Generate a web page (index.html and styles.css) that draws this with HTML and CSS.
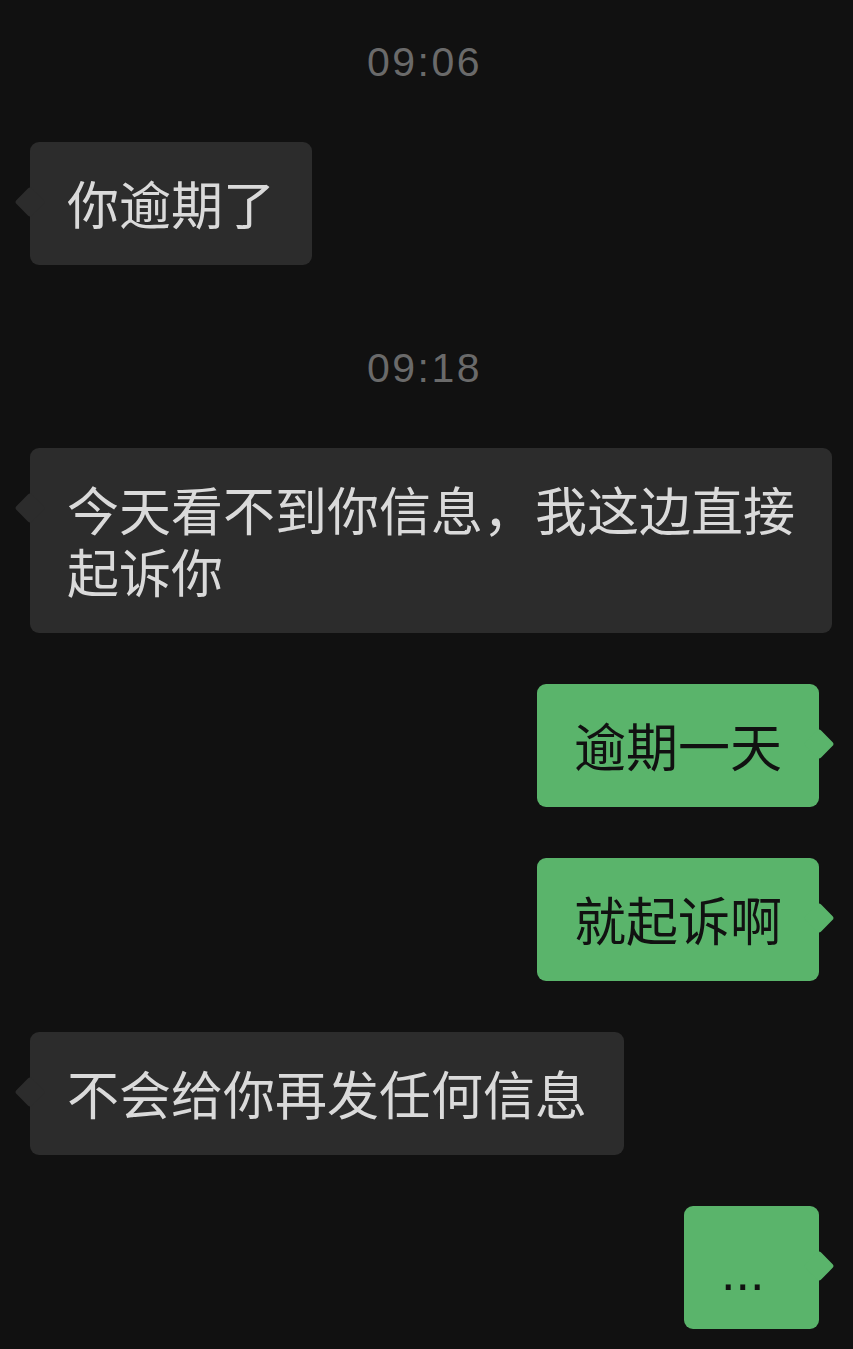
FILE: index.html
```html
<!DOCTYPE html>
<html lang="zh-CN">
<head>
  <meta charset="UTF-8">
  <meta name="viewport" content="width=device-width, initial-scale=1.0">
  <title>聊天记录</title>
  <link rel="stylesheet" href="styles.css">
</head>
<body>

  <div class="chat">
    <!-- 第一段 -->
    <div class="time">09:06</div>
    <div class="row left">
      <div class="bubble">你逾期了</div>
    </div>

    <!-- 第二段 -->
    <div class="time">09:18</div>
    <div class="row left">
      <div class="bubble">今天看不到你信息，我这边直接起诉你</div>
    </div>
    <div class="row right">
      <div class="bubble">逾期一天</div>
    </div>
    <div class="row right">
      <div class="bubble">就起诉啊</div>
    </div>
    <div class="row left">
      <div class="bubble">不会给你再发任何信息</div>
    </div>
    <div class="row right">
      <div class="bubble dots">...</div>
    </div>
  </div>

</body>
</html>
```

FILE: styles.css
```css
/* Fundo escuro da conversa */
body {
  margin: 0;
  background-color: #111111;
  font-family: "Noto Sans CJK SC", "Noto Sans", sans-serif;
}

.chat {
  display: flex;
  flex-direction: column;
  gap: 51px;
  padding: 37px 0 40px 0;
}

/* Horário no meio */
.time {
  height: 50px;
  line-height: 50px;
  margin-top: 27px;
  margin-bottom: 4px;
  padding-right: 4px;
  text-align: center;
  color: #6a6a6a;
  font-family: "Liberation Sans", Arial, sans-serif;
  font-size: 41px;
  letter-spacing: 2.5px;
}

.time:first-child {
  margin-top: 0;
}

.row {
  display: flex;
  padding: 0 20px 0 30px;
}

.row.right {
  justify-content: flex-end;
  padding-right: 34px;
}

/* Balão de mensagem */
.bubble {
  position: relative;
  max-width: 728px;
  min-width: 61px;
  padding: 30px 37px 31px;
  border-radius: 9px;
  font-size: 52px;
  line-height: 62px;
}

.left .bubble {
  background-color: #2c2c2c;
  color: #dadada;
}

.right .bubble {
  background-color: #5ab46b;
  color: #111111;
}

/* Setinha do balão */
.bubble::before {
  content: "";
  position: absolute;
  top: 49px;
  width: 22px;
  height: 22px;
  border-radius: 3px;
  transform: rotate(45deg);
  background-color: inherit;
}

.left .bubble::before {
  left: -11px;
}

.right .bubble::before {
  right: -11px;
}

.dots {
  padding-top: 35px;
  padding-bottom: 26px;
  font-family: "Liberation Sans", Arial, sans-serif;
}
```
